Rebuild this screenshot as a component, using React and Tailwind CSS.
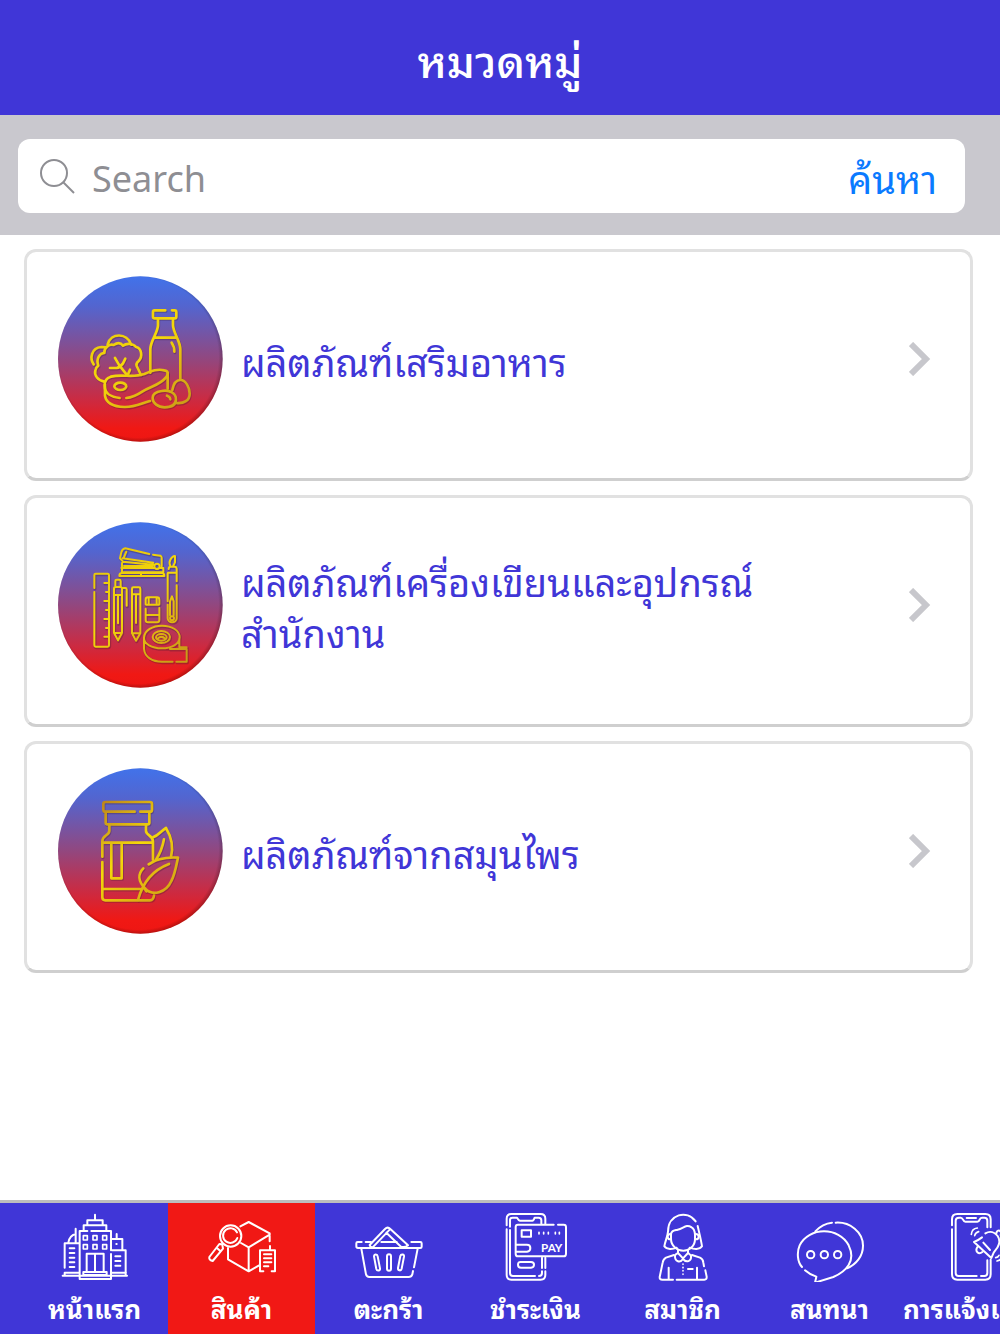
import React from "react";

const categories = [
  { id: "food", name: "ผลิตภัณฑ์เสริมอาหาร", Art: FoodArt },
  {
    id: "office",
    name: "ผลิตภัณฑ์เครื่องเขียนและอุปกรณ์\nสำนักงาน",
    Art: OfficeArt,
  },
  { id: "herb", name: "ผลิตภัณฑ์จากสมุนไพร", Art: HerbArt },
];

const tabs = [
  { id: "home", label: "หน้าแรก", Icon: HomeIcon },
  { id: "products", label: "สินค้า", Icon: ProductsIcon },
  { id: "cart", label: "ตะกร้า", Icon: CartIcon },
  { id: "pay", label: "ชำระเงิน", Icon: PayIcon },
  { id: "member", label: "สมาชิก", Icon: MemberIcon },
  { id: "chat", label: "สนทนา", Icon: ChatIcon },
  { id: "alerts", label: "การแจ้งเตือน", Icon: AlertsIcon },
];

// Round blue-to-red badge, gold line art goes inside
function Badge({ id, children }) {
  return (
    <svg
      className="h-[166px] w-[165px] shrink-0"
      viewBox="24 26 495 498"
      aria-hidden="true"
    >
      <defs>
        <linearGradient id={`${id}-bg`} x1="0" y1="0" x2="0" y2="1">
          <stop offset="0" stopColor="#4172ea" />
          <stop offset="0.18" stopColor="#5365cf" />
          <stop offset="0.5" stopColor="#92477f" />
          <stop offset="0.75" stopColor="#cc2a41" />
          <stop offset="0.92" stopColor="#f01814" />
          <stop offset="1" stopColor="#ee1613" />
        </linearGradient>
        <radialGradient id={`${id}-rim`} cx="0.49" cy="0.49" r="0.51">
          <stop offset="0.95" stopColor="#000" stopOpacity="0" />
          <stop offset="1" stopColor="#000" stopOpacity="0.22" />
        </radialGradient>
        <linearGradient
          id={`${id}-gold`}
          gradientUnits="userSpaceOnUse"
          x1="150"
          y1="120"
          x2="400"
          y2="430"
        >
          <stop offset="0" stopColor={id === "herb" ? "#b9801c" : "#e6c40c"} />
          <stop offset="0.45" stopColor="#f5d80a" />
          <stop offset="0.7" stopColor="#e2b810" />
          <stop offset="1" stopColor="#c99a18" />
        </linearGradient>
      </defs>
      <ellipse cx="271" cy="275" rx="247" ry="248" fill={`url(#${id}-bg)`} />
      <ellipse cx="271" cy="275" rx="247" ry="248" fill={`url(#${id}-rim)`} />
      <g fill="none" strokeLinecap="round" strokeLinejoin="round">
        <g
          stroke="#3c1a30"
          strokeOpacity="0.3"
          strokeWidth="9"
          transform="translate(2 3)"
        >
          {children}
        </g>
        <g stroke={`url(#${id}-gold)`} strokeWidth={id === "office" ? 6 : 8}>
          {children}
        </g>
      </g>
    </svg>
  );
}

function FoodArt() {
  return (
    <Badge id="food">
      <path d="M346 129H313q-4 0-4 5v14q0 5 5 5h60q5 0 5-5v-14q0-5-5-5h-8" />
      <path d="M324 154v20c0 22-23 46-23 72v70M369 154v20c0 22 22 46 22 72v90M312 211h69M365 226q9 13 8 27" />
      <path d="M163 343c-19-3-31-19-27-33 1-7 5-12 9-15-8-21 5-38 18-38-1-17 16-28 28-24 10-7 21-7 28 2 12-9 32-6 39 4 17 4 21 28 8 42-6 5-8 10-6 15l13 27" />
      <path d="M131 291c-12-16-8-50 23-52l13 1M173 231c10-36 58-35 71 1" />
      <path d="M180 302h20c8-1 13-6 19-14l7-14M195 272l13 22 22 28M240 307l-6 14" />
      <path d="M183 328c36-9 62 5 100-8 24-10 40-16 60-11 13 2 13 12 5 21-19 24-47 27-70 42-12 8-27 18-49 20M209 392c-22-2-45-12-45-37-1-15 5-23 19-27" />
      <path d="M165 352v33c4 24 31 33 58 34 32 1 50-11 77-18M353 320v44" />
      <ellipse cx="211" cy="357" rx="18" ry="11" />
      <path d="M335 371c24-5 44 8 43 26-1 17-15 23-34 23-20 0-36-12-36-28 0-13 10-19 27-21ZM351 385q10 4 10 11" />
      <path d="M367 368c3-16 11-30 24-30 17 0 28 23 28 41 0 20-17 31-41 28" />
    </Badge>
  );
}

function OfficeArt() {
  return (
    <Badge id="office">
      <path d="M133 224v-39q0-4 4-4h36q4 0 4 4v211q0 4-4 4h-36q-4 0-4-4V236M163 209h13M168 236h8M163 263h13M168 290h8M163 317h13M168 344h8M163 370h13" />
      <path d="M196 221v-18q0-4 4-4h8q4 0 4 4v18M192 226q0-5 5-5h14q5 0 5 5v133l-12 22-12-22ZM192 245h24M192 359h24M217 224h9q4 0 4 4v49M204 248v82" />
      <path d="M246 226q0-4 4-4h17q4 0 4 4v134l-13 22-12-22ZM246 243h25M246 360h25M258 248v81" />
      <path d="M328 273v-14q0-7-7-7h-27q-7 0-7 7v14M287 286v34q0 7 7 7h27q7 0 7-7v-36M288 274h39M288 305h39M296 254v18M320 254v18" />
      <path d="M298 122l-72-17q-9 1-12 12l-4 18 9 10 91 9M309 124l22 3q4 2 4 6v26M218 135l92 13M229 115l-8 19M216 149v13M222 158h86M214 164h98M216 164v13h124v-13h-10M208 188q0-9 8-9h120q7 0 7 9ZM273 180v7" />
      <circle cx="321" cy="159" r="8" />
      <path d="M361 158c-7-13 3-29 14-30v19l-6 12M356 167q0-7 6-7h12q6 0 6 7v37M380 216v99c0 16-27 16-27 0v-41M353 264v-83M354 178h25M360 306v-42l6-15 5 15v42" />
      <circle cx="366" cy="315" r="6" />
      <path d="M282 373c1-22 26-36 54-36 31 0 53 15 53 35s-24 33-54 33c-29 0-54-13-53-32ZM282 375v32c2 24 25 38 54 38h32M379 445h31v-38h-50M388 375v27h22" />
      <ellipse cx="334" cy="371" rx="26" ry="18" />
      <ellipse cx="334" cy="372" rx="16" ry="10" />
      <path d="M323 376q11-11 23 0" />
    </Badge>
  );
}

function HerbArt() {
  return (
    <Badge id="herb">
      <path d="M254 157H166q-6 0-6-6v-18q0-5 6-5h134q6 0 6 5v18q0 6-6 6h-29" />
      <path d="M167 158v32q0 5 6 5h119q6 0 6-5v-32M178 197v17c0 15-21 13-21 32v46M288 197v17c0 15 20 13 21 32v55M157 308v106q0 9 9 9h134q10 0 12-14M158 250h148M158 389h112" />
      <path d="M184 251v106h31V251" />
      <path d="M309 234c17-6 25-20 39-28 15 25 23 56 15 87M342 240c-5 27-12 43-24 61" />
      <path d="M296 315c25-18 54-22 88-20-5 24-10 52-20 70-16 36-57 46-78 23-23-23-22-45-6-61M357 314c-45 17-78 52-93 108M281 384l8 12" />
    </Badge>
  );
}

// Shared frame for the tab bar icons, drawn on a 3x grid
function TabIcon({ viewBox, children }) {
  return (
    <svg
      className="size-[70px] shrink-0"
      viewBox={viewBox}
      fill="none"
      stroke="currentColor"
      strokeWidth="6"
      strokeLinecap="round"
      strokeLinejoin="round"
      aria-hidden="true"
    >
      {children}
    </svg>
  );
}

function HomeIcon() {
  return (
    <TabIcon viewBox="180 66 210 210">
      <path d="M285 74v16M262 104V91h46v13M251 121v-15h68v15M262 123h-23v144h94v-75M274 123h59v58" />
      <path d="M250 137h12v13h-12ZM279 137h12v13h-12ZM308 137h12v13h-12ZM250 164h12v13h-12ZM279 164h12v13h-12ZM308 164h12v13h-12Z" strokeWidth="5" />
      <path d="M260 244v-53h51v53M285 192v52M250 255v-9h70v9ZM188 257h193M194 255v-7h42M336 248h41v7" />
      <path d="M194 233v-73h43M205 158c2-14 11-23 22-26M227 116v41M209 175h14M209 189h14M209 203h14M209 217h14M209 231h14" />
      <path d="M350 132v13M336 147h31v32M336 181h41v66M346 199h15M346 213h15M346 227h15" />
      <path d="M349 162h1" />
    </TabIcon>
  );
}

function ProductsIcon() {
  return (
    <TabIcon viewBox="621 66 210 210">
      <circle cx="692" cy="138" r="32" />
      <path d="M711 127a22 22 0 1 0 1 17" />
      <path d="M666 163l-8-1-30 39q-2 9 10 12l31-37-2-11M650 173l10 9" />
      <path d="M721 109l25-13 63 34v24M684 174v34l62 36 30-17M746 244v-72l-23-13M746 172l63-38" />
      <path d="M810 168v12M790 244h-10v-63h45v63h-10M792 193h22M792 205h22M792 217h22M792 229h13" />
    </TabIcon>
  );
}

function CartIcon() {
  return (
    <TabIcon viewBox="72 66 210 210">
      <path d="M95 156H83q-4 0-4 4v9q0 5 5 5h187q4 0 4-4v-10q0-4-4-4h-27M107 156h16M154 156h46" />
      <path d="M119 165l46-48q8-8 16 0l53 49M119 165q2 8 9 7l51-53M169 128l44 42q12 4 21-4" />
      <path d="M94 176l14 77q2 8 10 8h118q8 0 11-8l2-10M252 232l11-56" />
      <path d="M132 199c1-8 10-7 11 0l7 36c1 8-9 9-11 2ZM171 199c0-8 12-8 12 0v37c0 8-12 8-12 0ZM211 198c2-7 12-6 11 2l-7 36c-2 8-12 6-11-2Z" />
    </TabIcon>
  );
}

function PayIcon() {
  return (
    <TabIcon viewBox="513 66 210 210">
      <path d="M530 106V86q0-14 14-14h88q14 0 14 14v15M530 118v137q0 14 14 14h88q14 0 14-14v-11M646 234v-31" />
      <path d="M540 110V90q0-7 8-7h13q5 8 8 9h38q4 0 7-9h12q8 0 8 8v10M540 120v129q0 9 9 9h66M627 258q9 0 9-9v-5M636 234v-31" />
      <path d="M671 104H564q-7 0-7 7v80q0 8 7 8h137q7 0 7-8v-80q0-7-7-7h-17" />
      <path d="M575 121h28v19h-28ZM559 164h32q10 0 10 10t-10 11h-32M573 216h30q9 0 9 8t-9 9h-30q-9 0-9-9t9-8Z" />
      <path d="M627 127v5M641 127v5M655 127v5M676 127v5M688 127v5" strokeWidth="5" />
      <text
        x="633"
        y="187"
        fill="currentColor"
        stroke="none"
        fontFamily="Lato, sans-serif"
        fontSize="35"
        fontWeight="700"
      >
        PAY
      </text>
    </TabIcon>
  );
}

function MemberIcon() {
  return (
    <TabIcon viewBox="54 66 210 210">
      <path d="M197 94c-25-36-83-22-83 31-1 14-9 30-11 44 7 11 26 9 37 4M203 108c5 22 10 41 13 61-7 11-25 9-37 4" />
      <path d="M123 134c0-12 9-12 20-15 18-3 24-18 42-7q9 5 10 22v13c0 22-17 35-35 35s-37-14-37-35Z" />
      <path d="M121 132q-8 0-8 8t8 8M197 132q9 0 9 8t-9 8M144 180v9l15 16 15-16v-9M142 190q-6 3-7 7c-1 19 16 22 24 10 10 12 26 8 24-10l-7-7" />
      <path d="M132 195l-24 8q-8 4-10 15l-9 43q-1 8 8 8h32M186 195l24 8q9 4 10 15l2 11M226 241l4 19q1 9-7 9h-83M116 233v34M201 233v34M174 237h14" />
      <path d="M159 222v40" strokeDasharray="1 9" strokeWidth="5" />
    </TabIcon>
  );
}

function ChatIcon() {
  return (
    <TabIcon viewBox="495 66 210 210">
      <path d="M516 231c-14-15-16-45-7-65 28-56 118-56 147 0 23 47-8 79-46 95l-55 17 4-18c-13-4-23-9-34-19" />
      <path d="M556 124c14-15 30-24 50-26M617 98c43-3 82 29 82 69 0 31-20 56-48 68" />
      <circle cx="542" cy="194" r="11" />
      <circle cx="583" cy="194" r="11" />
      <circle cx="623" cy="194" r="11" />
    </TabIcon>
  );
}

function AlertsIcon() {
  return (
    <TabIcon viewBox="936 66 210 210">
      <path d="M966 106V88q0-16 16-16h84q16 0 16 16v24M966 118v135q0 16 16 16h84q16 0 16-16v-44" />
      <path d="M1072 112V92q0-9-9-9h-7q-5 0-7 6t-7 6h-36q-4 0-7-6t-7-6h-5q-10 0-10 9v157q0 9 9 9h54M1053 258h10q9 0 9-9v-38M1010 84h28" />
      <path d="M1066 130c14-8 28-4 37 8 8 12 5 25-1 35-9 10-15 21-18 31l-52-48c8-3 16-8 24-14M1060 158l20 22M1099 130c2-15 20-7 13 5M1043 170c-10 14 3 25 14 16" />
      <path d="M1024 133c1-11 8-18 18-19M1034 137q2-9 12-12M1097 203q7-1 10-7M1101 213q9-2 15-10" strokeWidth="5" />
    </TabIcon>
  );
}

function SearchBar() {
  const [query, setQuery] = React.useState("");

  return (
    <form
      className="bg-[#c9c8ce] pt-6 pr-[35px] pb-[22px] pl-[18px]"
      onSubmit={(e) => e.preventDefault()}
    >
      <div className="flex h-[74px] items-center rounded-xl bg-white pr-7 pl-[22px]">
        <svg
          className="size-9 shrink-0"
          viewBox="0 0 36 36"
          fill="none"
          stroke="#8e8e93"
          strokeWidth="2"
          aria-hidden="true"
        >
          <circle cx="14" cy="15" r="13" />
          <path d="M23 24l11 11" />
        </svg>
        <input
          type="search"
          aria-label="Search"
          placeholder="Search"
          value={query}
          onChange={(e) => setQuery(e.target.value)}
          className="ml-4 min-w-0 grow bg-transparent text-[36px] text-black outline-none placeholder:text-[#8e8e93]"
        />
        <button type="submit" className="text-[38px] leading-[51px] text-[#0a7aff]">
          ค้นหา
        </button>
      </div>
    </form>
  );
}

function CategoryCard({ category }) {
  const { id, name, Art } = category;
  return (
    <a
      href={`#${id}`}
      className="flex items-center rounded-xl border-[3px] border-[#e1e1e1] border-b-[#cfcfcf] bg-white pt-6 pr-[39px] pb-9 pl-[31px]"
    >
      <Art />
      <span className="ml-[18px] grow text-[38px] leading-[51px] whitespace-pre-line text-[#4036d7]">
        {name}
      </span>
      <svg
        className="h-[34px] w-[22px] shrink-0"
        viewBox="0 0 22 34"
        fill="none"
        stroke="#c7c7cc"
        strokeWidth="6"
        aria-hidden="true"
      >
        <path d="M2 2l15 15L2 32" />
      </svg>
    </a>
  );
}

function TabBar({ active, onSelect }) {
  return (
    <nav className="flex overflow-x-auto border-t-[3px] border-[#bdbdbd] bg-[#4036d7] pl-[21px] [scrollbar-width:none]">
      {tabs.map(({ id, label, Icon }) => (
        <button
          key={id}
          type="button"
          aria-current={id === active ? "page" : undefined}
          onClick={() => onSelect(id)}
          className={`flex h-[131px] w-[147px] shrink-0 flex-col items-center gap-[7px] pt-[9px] text-white ${
            id === active ? "bg-[#f11815]" : ""
          }`}
        >
          <Icon />
          <span className="text-[26px] leading-9 font-bold whitespace-nowrap">
            {label}
          </span>
        </button>
      ))}
    </nav>
  );
}

const App = () => {
  const [activeTab, setActiveTab] = React.useState("products");

  return (
    <div className="flex min-h-screen flex-col bg-white font-['Noto_Sans_Thai_Looped','Loma','Waree','Noto_Sans','Noto_Sans_Thai',sans-serif]">
      <header className="flex h-[115px] items-center justify-center bg-[#4036d7]">
        <h1 className="text-[44px] leading-[60px] font-medium text-white">
          หมวดหมู่
        </h1>
      </header>
      <SearchBar />
      <main className="flex grow flex-col gap-[14px] pt-[14px] pr-[27px] pl-6">
        {categories.map((category) => (
          <CategoryCard key={category.id} category={category} />
        ))}
      </main>
      <TabBar active={activeTab} onSelect={setActiveTab} />
    </div>
  );
};

export default App;
